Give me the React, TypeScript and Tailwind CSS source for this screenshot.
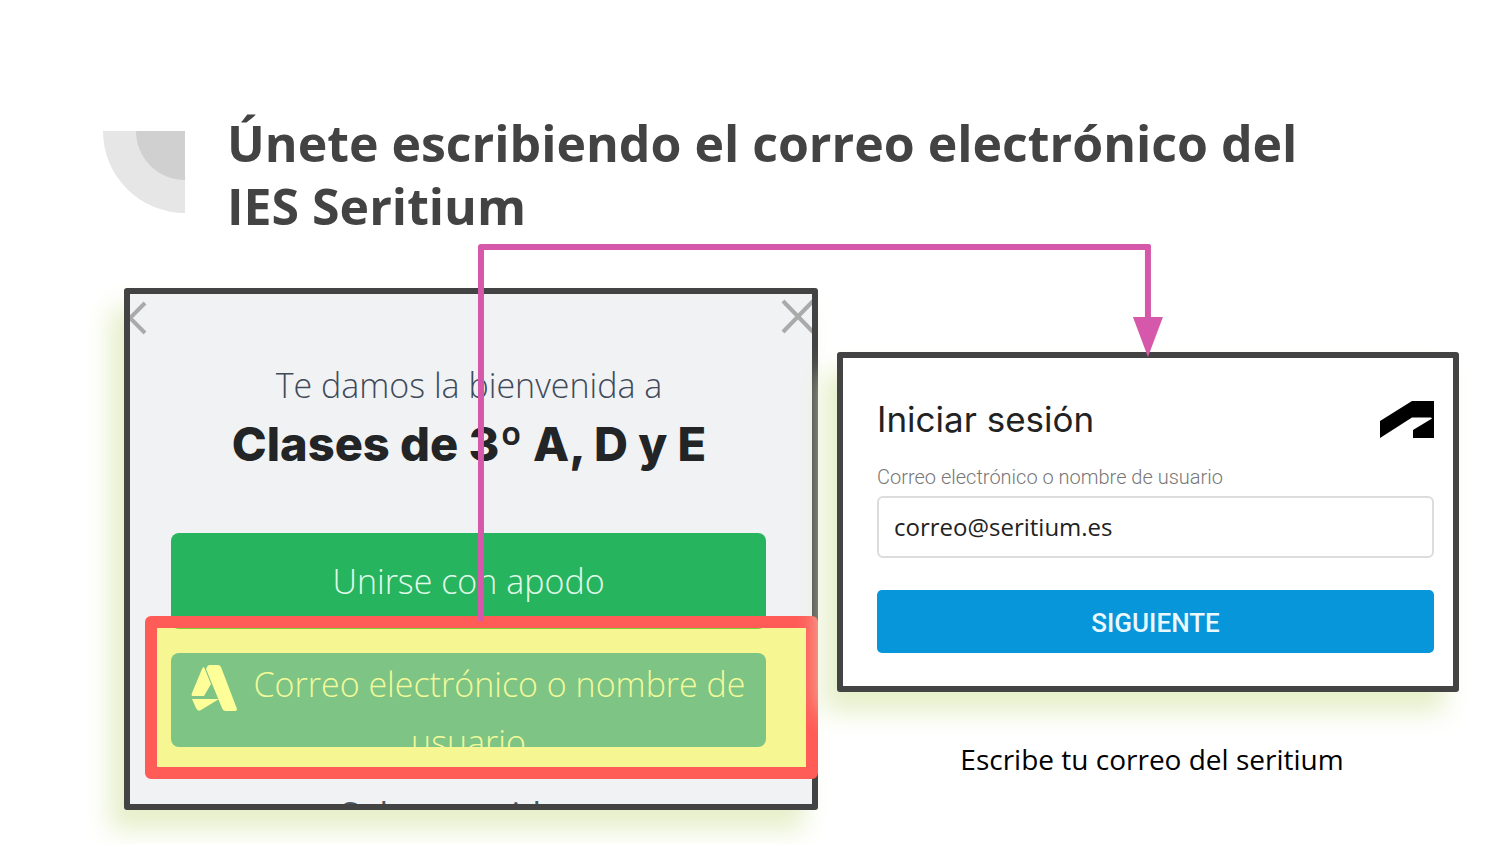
import React from "react";

const shadow = "shadow-[-14px_20px_26px_0px_#e6efc9]";

function Header() {
  return (
    <header className="flex items-start gap-[42px] pl-[103px] pr-[120px] pt-28">
      <svg className="mt-[19px] size-[82px] shrink-0" viewBox="0 0 82 82" aria-hidden="true">
        <path d="M0 0H82V82A82 82 0 0 1 0 0Z" fill="#e6e6e6" />
        <path d="M33 0H82V49A49 49 0 0 1 33 0Z" fill="#d0d0d0" />
      </svg>
      <h1 className="font-['Open_Sans',sans-serif] text-[50px] leading-[63px] font-bold text-nowrap text-[#434343]">
        Únete escribiendo el correo electrónico del
        <br />
        IES Seritium
      </h1>
    </header>
  );
}

function AutodeskMark() {
  return (
    <svg className="mr-4 inline-block size-[46px]" viewBox="0 0 46 46" fill="#fff" aria-hidden="true">
      <path d="M16 2Q16.500 0 19 0H27Q29 0 30 2L46 44Q46 46 44 46H35Q32 46 31 43L15 4Z" />
      <path d="M13 2L20 19L13 31H1Q0 30 1 28L11 4Q12 2 13 2Z" />
      <path d="M1 34H28L10 45Q7 47 5 43Z" />
    </svg>
  );
}

function JoinCard() {
  return (
    <section className="relative flex-[694]">
      <div
        className={`h-[522px] overflow-hidden rounded-[3px] border-6 border-[#434343] bg-[#f1f2f4] ${shadow}`}
      >
        <div className="-mx-4 flex justify-between pt-1">
          <button type="button" aria-label="Volver" className="size-10">
            <svg viewBox="0 0 40 40" fill="none" stroke="#aaa" strokeWidth="4">
              <path d="M31 5L16 20L31 35" />
            </svg>
          </button>
          <button type="button" aria-label="Cerrar" className="size-10">
            <svg className="overflow-visible" viewBox="0 0 40 40" fill="none" stroke="#aaa" strokeWidth="4">
              <path d="M-5 3L25 34M25 3L-5 34" />
            </svg>
          </button>
        </div>
        <div className="pt-[22px] pr-1 text-center">
          <p className="font-['Open_Sans',sans-serif] text-[34px] leading-[50px] font-light text-[#3f4a5a]">
            Te damos la bienvenida a
          </p>
          <h2 className="pt-1 font-['Inter',sans-serif] text-[47px] leading-[60px] font-extrabold text-[#222426]">
            Clases de 3º A, D y E
          </h2>
        </div>
        <div className="flex flex-col gap-6 pt-[59px] pr-[46px] pl-[41px] font-['Open_Sans',sans-serif] text-[34px] font-light">
          <button type="button" className="h-24 rounded-lg bg-[#27b45f] text-[#e2fbea]">
            Unirse con apodo
          </button>
          <button
            type="button"
            className="flex h-[94px] items-start justify-center overflow-hidden rounded-lg bg-[#289dde] pt-[2px] leading-[58px] text-[#eaf7ff]"
          >
            <span className="text-nowrap">
              <AutodeskMark />
              Correo electrónico o nombre de
              <br />
              usuario
            </span>
          </button>
        </div>
        <p className="pt-[47px] pr-6 text-center font-['Open_Sans',sans-serif] text-[34px] leading-10 text-[#4a5564]">
          Solo conocidos
        </p>
      </div>
      <div className="absolute top-[328px] right-0 left-[21px] h-[163px] rounded-md border-12 border-[#ff5b57] bg-[#ffff00]/40 bg-clip-padding" />
    </section>
  );
}

function LoginCard() {
  return (
    <section className="relative flex-[622] pt-16">
      <form className={`flex flex-col rounded-[3px] border-6 border-[#434343] bg-white pt-10 pr-[19px] pb-[33px] pl-[34px] ${shadow}`}>
        <div className="flex items-start justify-between">
          <h2 className="font-['Inter',sans-serif] text-[35px] leading-[42px] text-[#222]">Iniciar sesión</h2>
          <svg className="mt-[3px] h-[37px] w-[54px]" viewBox="0 0 54 37" aria-hidden="true">
            <path d="M0 20L32 0H54V37H33V29L52 17.500L51 16.500H32L0 37Z" />
          </svg>
        </div>
        <label htmlFor="email" className="pt-[21px] pb-[3px] font-['Roboto',sans-serif] text-[20px] leading-8 font-light text-[#777]">
          Correo electrónico o nombre de usuario
        </label>
        <input
          id="email"
          type="text"
          defaultValue="correo@seritium.es"
          className="h-[62px] rounded-md border-2 border-[#dcdcdc] bg-white px-[15px] pb-[2px] font-['Open_Sans',sans-serif] text-[24px] text-[#222]"
        />
        <button
          type="button"
          className="mt-8 h-[63px] rounded-[5px] bg-[#0696d9] pt-1 font-['Roboto',sans-serif] text-[26px] font-medium text-[#eaf8ff]"
        >
          SIGUIENTE
        </button>
      </form>
      <p className="pt-[47px] pl-2 text-center font-['Open_Sans',sans-serif] text-[28px] leading-10 text-black">
        Escribe tu correo del seritium
      </p>
    </section>
  );
}

function Connector() {
  return (
    <svg className="pointer-events-none absolute inset-x-0 -top-11 h-96 w-full overflow-visible" aria-hidden="true">
      <g stroke="#d658ab" strokeWidth="6">
        <line x1="26.740%" y1="3" x2="26.740%" y2="377" />
        <line x1="26.740%" y1="3" x2="76.700%" y2="3" strokeLinecap="round" />
        <line x1="76.700%" y1="3" x2="76.700%" y2="76" strokeLinecap="round" />
      </g>
      <svg x="76.700%" y="73" className="overflow-visible">
        <path d="M-15 0H15L0 40Z" fill="#d658ab" />
      </svg>
    </svg>
  );
}

export default function App() {
  return (
    <main className="min-h-screen overflow-hidden bg-white">
      <Header />
      <div className="relative mt-[50px] mr-[41px] mb-8 ml-[124px] flex items-start gap-[19px]">
        <JoinCard />
        <LoginCard />
        <Connector />
      </div>
    </main>
  );
}
